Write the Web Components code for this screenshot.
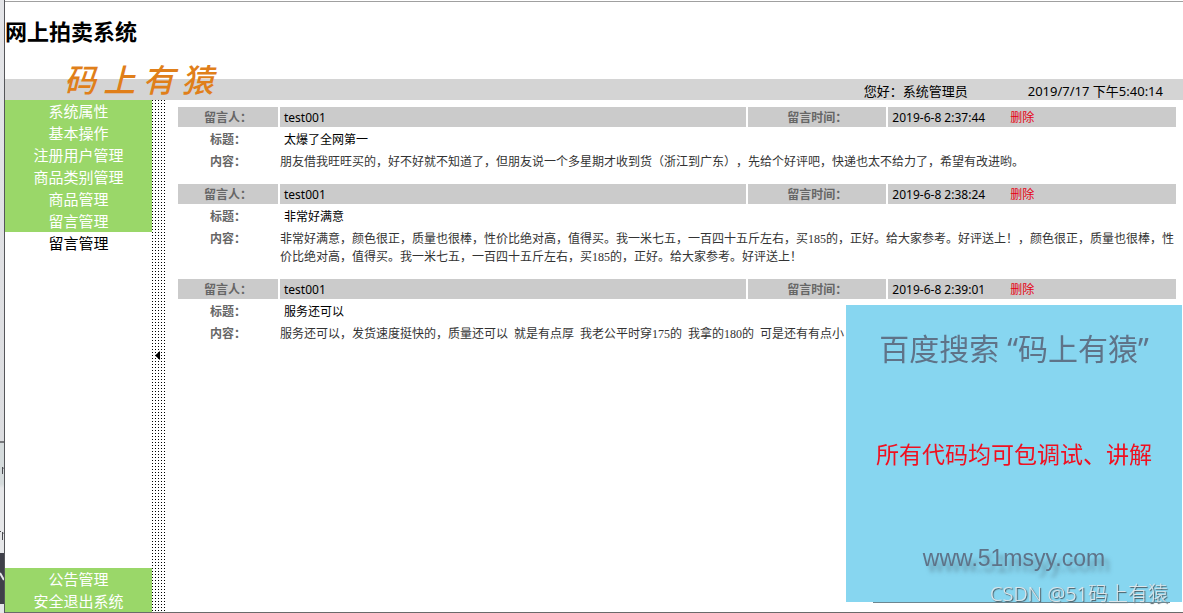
<!DOCTYPE html>
<html lang="zh-CN">
<head>
<meta charset="utf-8">
<title>网上拍卖系统</title>
<style>
    body {
        margin: 0;
        min-height: 100vh;
        display: flex;
        background-color: white;
        color: black;
        font: 12px/18px "Noto Sans", "Noto Sans CJK SC", sans-serif;
        text-spacing-trim: space-all;
    }
</style>
</head>
<body>
<desk-edge></desk-edge>
<admin-page>
    <site-header slot="header" user="系统管理员" clock="2019/7/17 下午5:40:14">
        网上拍卖系统
        <span slot="logo">码 上 有 猿</span>
    </site-header>
    <side-menu slot="menu">
        <menu-item>系统属性</menu-item>
        <menu-item>基本操作</menu-item>
        <menu-item>注册用户管理</menu-item>
        <menu-item>商品类别管理</menu-item>
        <menu-item>商品管理</menu-item>
        <menu-item>留言管理</menu-item>
        <menu-item current>留言管理</menu-item>
        <menu-item slot="bottom">公告管理</menu-item>
        <menu-item slot="bottom">安全退出系统</menu-item>
    </side-menu>
    <message-card author="test001" time="2019-6-8 2:37:44">
        <span slot="title">太爆了全网第一</span>
        朋友借我旺旺买的，好不好就不知道了，但朋友说一个多星期才收到货（浙江到广东），先给个好评吧，快递也太不给力了，希望有改进哟。
    </message-card>
    <message-card author="test001" time="2019-6-8 2:38:24">
        <span slot="title">非常好满意</span>
        非常好满意，颜色很正，质量也很棒，性价比绝对高，值得买。我一米七五，一百四十五斤左右，买185的，正好。给大家参考。好评送上！，颜色很正，质量也很棒，性价比绝对高，值得买。我一米七五，一百四十五斤左右，买185的，正好。给大家参考。好评送上！
    </message-card>
    <message-card author="test001" time="2019-6-8 2:39:01">
        <span slot="title">服务还可以</span>
        服务还可以，发货速度挺快的，质量还可以&nbsp; 就是有点厚&nbsp; 我老公平时穿175的&nbsp; 我拿的180的&nbsp; 可是还有有点小
    </message-card>
</admin-page>
<promo-panel>
    百度搜索 “码上有猿”
    <span slot="offer">所有代码均可包调试、讲解</span>
    <span slot="site">www.51msyy.com</span>
    <span slot="mark">CSDN @51码上有猿</span>
</promo-panel>

<script>
class DeskEdge extends HTMLElement {
    constructor() {
        super();
        this.attachShadow({ mode: 'open' });
        this.shadowRoot.innerHTML = `
            <style>
                :host {
                    flex: none;
                    width: 4px;
                    border-right: 1px solid #55565a;
                    background: linear-gradient(#e4e5e8, #dcdde0 441px, #77797c 441px, #77797c 443px, #d5dbdc 443px, #d5dbdc 484px, #e6e7e9 488px, #e6e7e9 553px, #3f4049 553px, #3f4049 604px, #e6e7e9 604px);
                }

                svg {
                    display: block;
                }
            </style>
            <svg width="4" height="613" fill="none" stroke="#4a4b50">
                <path d="M2.500 467V474M2.500 469L4 467.500M2.500 532V540M2.500 534L4 532.500M0 531.500H1"/>
                <path d="M0 573L4 580" stroke="#e6e7e9" stroke-width="2"/>
            </svg>
        `;
    }
}

class AdminPage extends HTMLElement {
    constructor() {
        super();
        this.attachShadow({ mode: 'open' });
        this.shadowRoot.innerHTML = `
            <style>
                :host {
                    flex: 1;
                    min-width: 0;
                    display: flex;
                    flex-direction: column;
                    box-sizing: border-box;
                    border-bottom: 1px solid #6a6a6a;
                }

                .content {
                    flex: 1;
                    display: flex;
                }

                .handle {
                    flex: none;
                    width: 14px;
                    padding: 0 2px 0 0;
                    border: 0;
                    display: flex;
                    align-items: center;
                    justify-content: center;
                    background: conic-gradient(from 270deg at 1px 1px, black 90deg, transparent 0) 0 0 / 3px 3px white;
                }

                main {
                    flex: 1;
                    min-width: 0;
                    display: flex;
                    flex-direction: column;
                    gap: 9px;
                    padding: 5px 5px 0 10px;
                }
            </style>
            <slot name="header"></slot>
            <div class="content">
                <slot name="menu"></slot>
                <button class="handle" aria-label="收起菜单">
                    <svg width="6" height="10" viewBox="0 0 6 10"><path d="M5 0V9L0 4.500Z"/></svg>
                </button>
                <main><slot></slot></main>
            </div>
        `;
    }
}

class SiteHeader extends HTMLElement {
    constructor() {
        super();
        this.attachShadow({ mode: 'open' });
        this.shadowRoot.innerHTML = `
            <style>
                :host {
                    position: relative;
                    display: block;
                    border-top: 1px solid #a0a0a0;
                    margin-top: 1px;
                }

                h1 {
                    margin: 0;
                    height: 77px;
                    font-size: 22px;
                    line-height: 58px;
                }

                .bar {
                    display: flex;
                    justify-content: flex-end;
                    gap: 60px;
                    height: 21px;
                    padding-right: 20px;
                    background-color: #d4d4d4;
                    font-size: 13px;
                    line-height: 24px;
                }

                .logo {
                    position: absolute;
                    left: 59px;
                    top: 56px;
                    color: #e07f1a;
                    font: italic 500 32px/40px "Noto Sans CJK SC", sans-serif;
                }
            </style>
            <h1><slot></slot></h1>
            <div class="bar">
                <span>您好：${this.getAttribute('user')}</span>
                <time>${this.getAttribute('clock')}</time>
            </div>
            <div class="logo"><slot name="logo"></slot></div>
        `;
    }
}

class SideMenu extends HTMLElement {
    constructor() {
        super();
        this.attachShadow({ mode: 'open' });
        this.shadowRoot.innerHTML = `
            <style>
                :host {
                    flex: none;
                    width: 147px;
                    display: flex;
                }

                nav {
                    flex: 1;
                    display: flex;
                    flex-direction: column;
                    justify-content: space-between;
                }
            </style>
            <nav>
                <div><slot></slot></div>
                <div><slot name="bottom"></slot></div>
            </nav>
        `;
    }
}

class MenuItem extends HTMLElement {
    constructor() {
        super();
        this.attachShadow({ mode: 'open' });
        this.shadowRoot.innerHTML = `
            <style>
                :host {
                    display: block;
                    background-color: #9ad769;
                    color: white;
                }

                :host([current]) {
                    background-color: white;
                    color: black;
                }

                a {
                    display: block;
                    color: inherit;
                    font-size: 15px;
                    line-height: 22px;
                    text-align: center;
                    text-decoration: none;
                }
            </style>
            <a href="#"><slot></slot></a>
        `;
    }
}

class MessageCard extends HTMLElement {
    constructor() {
        super();
        this.attachShadow({ mode: 'open' });
        this.shadowRoot.innerHTML = `
            <style>
                :host {
                    display: block;
                }

                table {
                    width: 100%;
                    table-layout: fixed;
                    border-spacing: 2px;
                }

                .label {
                    width: 100px;
                }

                .when {
                    width: 138px;
                }

                .time {
                    width: 29%;
                }

                th, td {
                    padding: 2px 0 0;
                    vertical-align: top;
                }

                th {
                    color: #666;
                }

                td {
                    padding-left: 4px;
                }

                .head > * {
                    background-color: #cbcbcb;
                }

                .text {
                    padding-left: 0;
                    color: #333;
                    font-family: "Liberation Serif", "Noto Sans CJK SC", serif;
                }

                a {
                    margin-left: 25px;
                    color: #e60012;
                    text-decoration: none;
                }
            </style>
            <table>
                <colgroup>
                    <col class="label"><col><col class="when"><col class="time">
                </colgroup>
                <tr class="head">
                    <th>留言人：</th>
                    <td>${this.getAttribute('author')}</td>
                    <th>留言时间：</th>
                    <td>${this.getAttribute('time')}<a href="#">删除</a></td>
                </tr>
                <tr>
                    <th>标题：</th>
                    <td colspan="3"><slot name="title"></slot></td>
                </tr>
                <tr>
                    <th>内容：</th>
                    <td class="text" colspan="3"><slot></slot></td>
                </tr>
            </table>
        `;
    }
}

class PromoPanel extends HTMLElement {
    constructor() {
        super();
        this.attachShadow({ mode: 'open' });
        this.shadowRoot.innerHTML = `
            <style>
                /* floats over the message list */
                :host {
                    position: fixed;
                    right: 1px;
                    bottom: 11px;
                    width: 336px;
                    height: 297px;
                    box-sizing: border-box;
                    padding: 22px 0;
                    display: flex;
                    flex-direction: column;
                    justify-content: space-between;
                    text-align: center;
                    background-color: #87d6f0;
                    color: #5f7388;
                    font: 23px/44px "Noto Sans", "Noto Sans CJK SC", sans-serif;
                }

                :host::after {
                    content: "";
                    position: absolute;
                    left: 27px;
                    right: 12px;
                    bottom: -1px;
                    border-bottom: 1px solid #6d8690;
                }

                .search {
                    font-size: 30px;
                }

                .offer {
                    color: #f01020;
                }

                .site {
                    font-family: "Liberation Sans", sans-serif;
                    text-shadow: 5px 6px 4px #50708099;
                }

                .mark {
                    position: absolute;
                    right: 14px;
                    bottom: -8px;
                    color: #dde6ea;
                    font-size: 20px;
                    line-height: 32px;
                    font-weight: 300;
                    text-shadow: 1px 1px 1px #47555c;
                }
            </style>
            <div class="search"><slot></slot></div>
            <div class="offer"><slot name="offer"></slot></div>
            <div class="site"><slot name="site"></slot></div>
            <div class="mark"><slot name="mark"></slot></div>
        `;
    }
}

customElements.define("desk-edge", DeskEdge);
customElements.define("admin-page", AdminPage);
customElements.define("site-header", SiteHeader);
customElements.define("side-menu", SideMenu);
customElements.define("menu-item", MenuItem);
customElements.define("message-card", MessageCard);
customElements.define("promo-panel", PromoPanel);
</script>
</body>
</html>
